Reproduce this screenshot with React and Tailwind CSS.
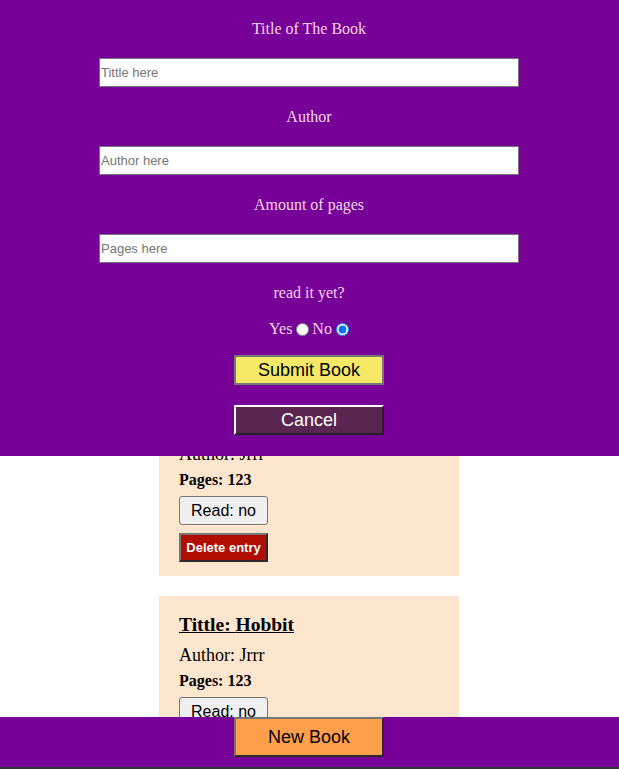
import { useState } from 'react';

const books = [
  { title: 'Hobbit', author: 'Jrrr', pages: 123, read: false },
  { title: 'Hobbit', author: 'Jrrr', pages: 123, read: false },
];

function Field({ label, placeholder, last }) {
  return (
    <>
      <p className="h-[18px] leading-[18px] text-[16px] text-[#f3d6e6]">{label}</p>
      <input
        type="text"
        placeholder={placeholder}
        className={`mt-[20px] ${last ? '' : 'mb-[21px]'} block w-[420px] h-[29px] bg-white border border-[#767676] px-[1px] text-[13px] font-['Liberation_Sans',Arial,sans-serif] text-black placeholder:text-[#757575] outline-none`}
      />
    </>
  );
}

function BookCard({ book }) {
  const [read, setRead] = useState(book.read);
  return (
    <div className="w-[300px] bg-[#fee5cd] pl-[20px] pt-[17px] pb-[14px]">
      <h2 className="text-[19.5px] leading-[24px] font-bold underline">Tittle: {book.title}</h2>
      <p className="mt-[7px] text-[18px] leading-[22px]">Author: {book.author}</p>
      <p className="mt-[5px] text-[16px] leading-[20px] font-bold">Pages: {book.pages}</p>
      <button
        onClick={() => setRead(!read)}
        className="mt-[6px] block w-[89px] h-[29px] bg-[#efefef] border border-[#767676] rounded-[3px] text-[16px] font-['Liberation_Sans',Arial,sans-serif]"
      >
        Read: {read ? 'yes' : 'no'}
      </button>
      <button className="mt-[8px] block w-[89px] h-[29px] bg-[#b00e00] text-white text-[13px] font-bold border-2 border-t-[#767676] border-l-[#767676] border-r-[#2a2a2a] border-b-[#2a2a2a] font-['Liberation_Sans',Arial,sans-serif]">
        Delete entry
      </button>
    </div>
  );
}

export default function App() {
  return (
    <div className="min-h-[769px] bg-white font-['Liberation_Serif','Times_New_Roman',serif] text-black">
      {/* Book list */}
      <main className="pt-[395px] pb-[80px] pr-[1px] flex flex-col items-center gap-[20px]">
        {books.map((b, i) => (
          <BookCard key={i} book={b} />
        ))}
      </main>

      {/* Form overlay */}
      <form
        onSubmit={(e) => e.preventDefault()}
        className="fixed top-0 left-0 right-0 h-[456px] bg-[#770099] flex flex-col items-center pt-[20px] pr-[1px] text-center"
      >
        <Field label="Title of The Book" placeholder="Tittle here" />
        <Field label="Author" placeholder="Author here" />
        <Field label="Amount of pages" placeholder="Pages here" last />
        <p className="mt-[21px] h-[18px] leading-[18px] text-[16px] text-[#f3d6e6]">read it yet?</p>
        <div className="mt-[18px] h-[18px] flex items-center text-[16px] text-[#f3d6e6]">
          <span>Yes</span>
          <input type="radio" name="read" className="ml-[4px] mr-[3px] w-[13px] h-[13px]" />
          <span>No</span>
          <input type="radio" name="read" defaultChecked className="ml-[4px] w-[13px] h-[13px]" />
        </div>
        <button
          type="submit"
          className="mt-[17px] w-[150px] h-[30px] bg-[#f5e866] border-2 border-[#767676] text-[18px] text-black font-['Liberation_Sans',Arial,sans-serif]"
        >
          Submit Book
        </button>
        <button
          type="button"
          className="mt-[20px] w-[150px] h-[30px] bg-[#5a2651] border-2 border-t-white border-l-white border-r-[#222] border-b-[#222] text-[18px] text-white font-['Liberation_Sans',Arial,sans-serif]"
        >
          Cancel
        </button>
      </form>

      {/* Bottom bar */}
      <footer className="fixed bottom-0 left-0 right-0 h-[52px] bg-[#770099] border-b-2 border-[#333] flex justify-center pr-[1px]">
        <button className="w-[150px] h-[40px] bg-[#ff9f4c] border-2 border-t-[#767676] border-l-[#767676] border-r-[#2a2a2a] border-b-[#2a2a2a] text-[18px] text-black font-['Liberation_Sans',Arial,sans-serif]">
          New Book
        </button>
      </footer>
    </div>
  );
}
